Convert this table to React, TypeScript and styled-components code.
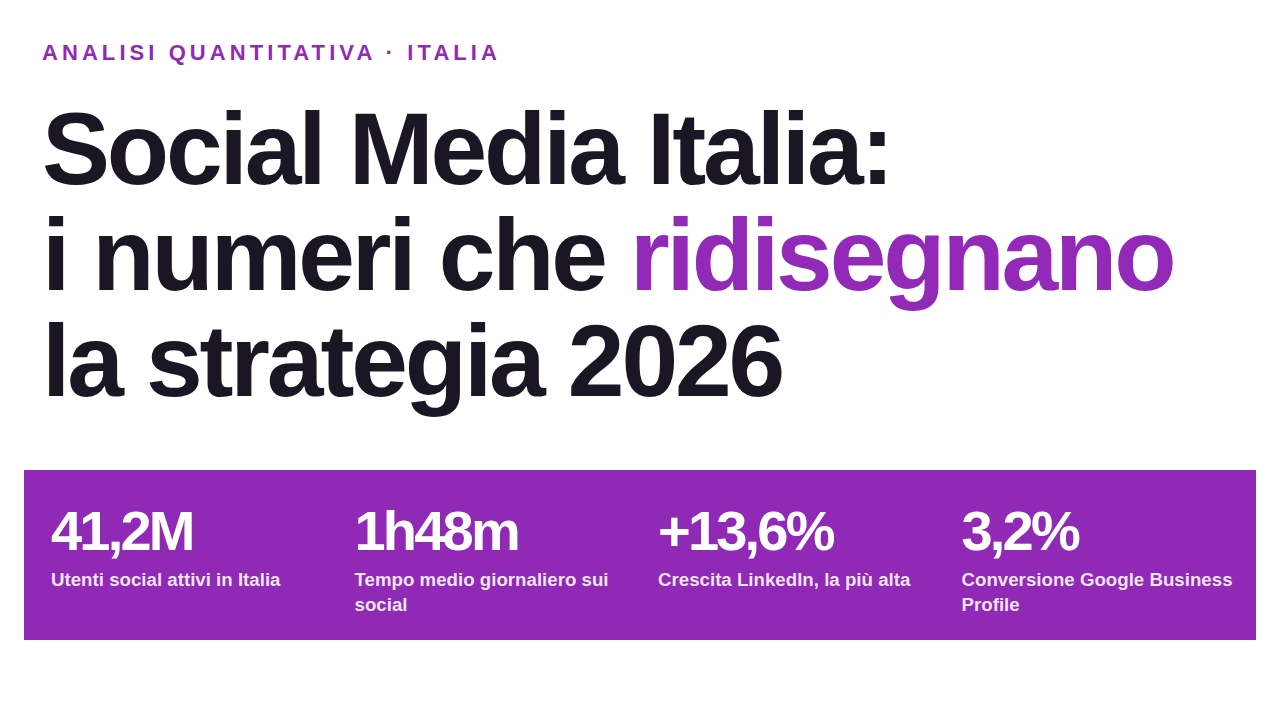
import React from "react";
import styled, { createGlobalStyle } from "styled-components";

const GlobalStyle = createGlobalStyle`
  html, body {
    margin: 0;
    padding: 0;
    background: #ffffff;
  }
  body {
    font-family: "Liberation Sans", Arial, sans-serif;
  }
`;

const stats = [
  { value: "41,2M", label: "Utenti social attivi in Italia" },
  { value: "1h48m", label: "Tempo medio giornaliero sui social" },
  { value: "+13,6%", label: "Crescita LinkedIn, la più alta" },
  { value: "3,2%", label: "Conversione Google Business Profile" },
];

const App = () => {
  return (
    <>
      <GlobalStyle />
      <Page>
        <Hero>
          <Eyebrow>Analisi quantitativa · Italia</Eyebrow>
          <Headline>
            Social Media Italia:
            <br />i numeri che <Accent>ridisegnano</Accent>
            <br />
            la strategia 2026
          </Headline>
        </Hero>
        <StatsBand>
          {stats.map((s) => (
            <Stat key={s.value}>
              <StatValue>{s.value}</StatValue>
              <StatLabel>{s.label}</StatLabel>
            </Stat>
          ))}
        </StatsBand>
      </Page>
    </>
  );
};

export default App;

const Page = styled.div`
  width: 1280px;
  height: 720px;
  box-sizing: border-box;
  padding: 39px 24px 0;
  display: flex;
  flex-direction: column;
`;
const Hero = styled.div`
  padding: 0 18px;
`;
const Eyebrow = styled.div`
  color: #9229b8;
  font-size: 22px;
  font-weight: bold;
  line-height: 28px;
  letter-spacing: 0.185em;
  text-transform: uppercase;
`;
const Headline = styled.h1`
  margin: 29px 0 0;
  color: #1b1624;
  font-size: 102px;
  font-weight: bold;
  line-height: 106px;
  letter-spacing: -0.031em;
`;
const Accent = styled.span`
  color: #9229b8;
`;
const StatsBand = styled.div`
  margin-top: 56px;
  background: #9129b7;
  padding: 33px 20px 23px 27px;
  display: grid;
  grid-template-columns: repeat(4, 1fr);
  column-gap: 29px;
`;
const Stat = styled.div`
  display: flex;
  flex-direction: column;
`;
const StatValue = styled.div`
  color: #ffffff;
  font-size: 56px;
  font-weight: bold;
  line-height: 56px;
  letter-spacing: -0.05em;
`;
const StatLabel = styled.div`
  margin-top: 8px;
  color: rgba(255, 255, 255, 0.88);
  font-size: 18.7px;
  font-weight: bold;
  line-height: 25px;
`;
